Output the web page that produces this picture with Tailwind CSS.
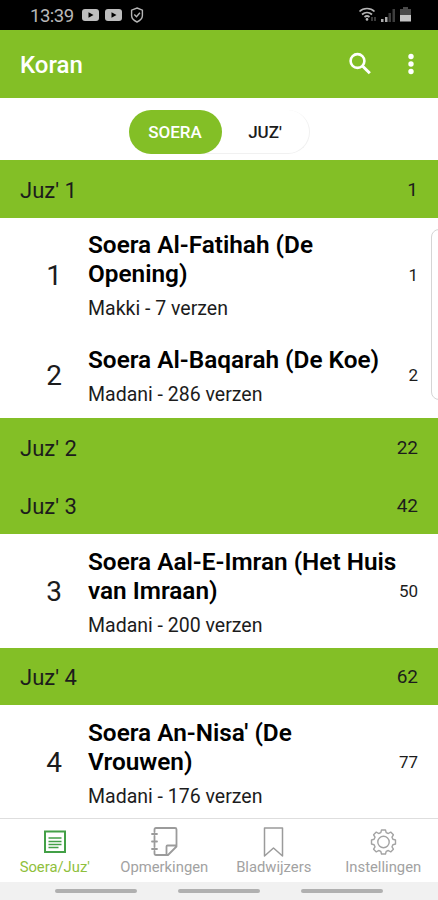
<!DOCTYPE html>
<html lang="nl">
<head>
    <meta charset="UTF-8">
    <meta name="viewport" content="width=device-width, initial-scale=1.0">
    <title>Koran</title>
    <script src="https://cdn.jsdelivr.net/npm/@tailwindcss/browser@4"></script>
</head>
<body class="bg-white font-[Roboto,sans-serif] text-[#1c1c1c]">
    <div class="relative flex flex-col w-[438px] h-[900px] overflow-hidden">
        <!-- Status bar -->
        <div class="flex items-center h-[30px] shrink-0 bg-black pl-[30px] pr-[27px] text-[#b8b8b8]">
            <span class="w-[45px] pt-px text-[18.500px] leading-[30px] tracking-[-0.5px] whitespace-nowrap">13:39</span>
            <svg class="ml-[7px]" width="17" height="14" viewBox="0 0 17 14"><rect y="1" width="17" height="12" rx="3" fill="#bdbdbd"/><path d="M6.500 4.200v5.600l5-2.800z" fill="#000"/></svg>
            <svg class="ml-[6px]" width="17" height="14" viewBox="0 0 17 14"><rect y="1" width="17" height="12" rx="3" fill="#bdbdbd"/><path d="M6.500 4.200v5.600l5-2.800z" fill="#000"/></svg>
            <svg class="ml-[8px]" width="14" height="16" viewBox="0 0 14 16" fill="none" stroke="#b5b5b5" stroke-width="1.400"><path d="M7 1l5.400 2.200v5.300c0 2.800-2.200 5-5.400 6.500-3.200-1.500-5.400-3.700-5.400-6.500v-5.300z"/><path d="M4.300 7.500l2.200 2.200 3.400-4"/></svg>
            <svg class="ml-auto" width="20" height="16" viewBox="0 0 20 16" fill="none" stroke="#b5b5b5" stroke-width="1.700"><path d="M1.500 4.500c4-4 11-4 15 0M4 7.500c3-2.700 7-2.700 10 0M6.500 10c1.500-1.200 3.500-1.200 5 0"/><circle cx="9" cy="12.400" r="1.300" fill="#b5b5b5" stroke="none"/><path d="M14 10v4M17 10v4" stroke="#444"/></svg>
            <svg class="ml-[3px]" width="15" height="16" viewBox="0 0 15 16"><path d="M0 12h2.500v3H0zM4 10h2.500v5H4z" fill="#aaa"/><path d="M7.500 6H10v9H7.500zM11.500 2H14v13h-2.500z" fill="#3d3d3d"/></svg>
            <svg class="ml-[4px]" width="11" height="16" viewBox="0 0 11 16"><path d="M3 0h5v2h3v7H0V2h3z" fill="#4a4a4a"/><path d="M0 8h11v6.500H0z" fill="#c4c4c4"/></svg>
        </div>

        <!-- App bar -->
        <header class="flex items-center h-[68px] shrink-0 bg-[#83bf26] pl-5 pr-[22px] text-white">
            <h1 class="pt-0.5 text-[24px] font-medium">Koran</h1>
            <svg class="ml-auto" width="24" height="24" viewBox="0 0 24 24" fill="none" stroke="#fff" stroke-width="2.600"><circle cx="9.500" cy="9" r="6.900"/><path d="M14.500 14l7.300 7.300" stroke-width="3"/></svg>
            <svg class="ml-[34px]" width="10" height="22" viewBox="0 0 10 22" fill="#fff"><circle cx="5" cy="3.500" r="2.700"/><circle cx="5" cy="11" r="2.700"/><circle cx="5" cy="18.500" r="2.700"/></svg>
        </header>

        <!-- Soera / Juz' switch -->
        <div class="flex justify-center h-[62px] shrink-0 pt-3">
            <div class="flex w-[181px] h-[44px] rounded-full border-r border-b border-[#f1f1f1] text-[17px] font-medium">
                <button class="w-[93px] h-[44px] rounded-full bg-[#83bf26] pt-0.5 text-white">SOERA</button>
                <button class="flex-1 h-[44px] pt-0.5">JUZ'</button>
            </div>
        </div>

        <!-- List -->
        <main class="flex flex-col h-[658px] shrink-0">
            <div class="flex items-center justify-between h-[58px] shrink-0 bg-[#83bf26] px-5 pt-0.5">
                <span class="text-[22px]">Juz' 1</span><span class="text-[19px]">1</span>
            </div>
            <div class="flex items-center h-[114px] shrink-0 pl-[20px] pr-5 pt-px">
                <span class="w-[68px] text-center text-[28px]">1</span>
                <div class="flex-1">
                    <h2 class="text-[24.350px] leading-[29px] font-semibold text-black whitespace-nowrap">Soera Al-Fatihah (De<br>Opening)</h2>
                    <p class="mt-[9px] text-[19.500px] leading-6">Makki - 7 verzen</p>
                </div>
                <span class="text-[17px]">1</span>
            </div>
            <div class="flex items-center h-[86px] shrink-0 pl-[20px] pr-5 pt-0.5">
                <span class="w-[68px] text-center text-[28px]">2</span>
                <div class="flex-1">
                    <h2 class="text-[24.350px] leading-[29px] font-semibold text-black whitespace-nowrap">Soera Al-Baqarah (De Koe)</h2>
                    <p class="mt-[9px] text-[19.500px] leading-6">Madani - 286 verzen</p>
                </div>
                <span class="text-[17px]">2</span>
            </div>
            <div class="flex items-center justify-between h-[58px] shrink-0 bg-[#83bf26] px-5 pt-[3px]">
                <span class="text-[22px]">Juz' 2</span><span class="text-[19px]">22</span>
            </div>
            <div class="flex items-center justify-between h-[58px] shrink-0 bg-[#83bf26] px-5 pt-[3px]">
                <span class="text-[22px]">Juz' 3</span><span class="text-[19px]">42</span>
            </div>
            <div class="flex items-center h-[114px] shrink-0 pl-[20px] pr-5 pt-0.5">
                <span class="w-[68px] text-center text-[28px]">3</span>
                <div class="flex-1 w-0">
                    <h2 class="text-[24.350px] leading-[29px] font-semibold text-black whitespace-nowrap">Soera Aal-E-Imran (Het Huis<br>van Imraan)</h2>
                    <p class="mt-[9px] text-[19.500px] leading-6">Madani - 200 verzen</p>
                </div>
                <span class="text-[17px]">50</span>
            </div>
            <div class="flex items-center justify-between h-[57px] shrink-0 bg-[#83bf26] px-5 pt-px">
                <span class="text-[22px]">Juz' 4</span><span class="text-[19px]">62</span>
            </div>
            <div class="flex items-center h-[114px] shrink-0 pl-[20px] pr-5 pt-0.5">
                <span class="w-[68px] text-center text-[28px]">4</span>
                <div class="flex-1">
                    <h2 class="text-[24.350px] leading-[29px] font-semibold text-black whitespace-nowrap">Soera An-Nisa' (De<br>Vrouwen)</h2>
                    <p class="mt-[9px] text-[19.500px] leading-6">Madani - 176 verzen</p>
                </div>
                <span class="text-[17px]">77</span>
            </div>
        </main>

        <!-- Edge panel handle -->
        <div class="absolute left-[431px] top-[229px] w-4 h-[171px] rounded-lg border border-[#d5d5d5] bg-white"></div>

        <!-- Tab bar -->
        <nav class="grid grid-cols-4 h-[64px] shrink-0 border-t border-[#dedede] bg-white text-[14.800px] text-[#a2a2a2]">
            <a class="flex flex-col items-center text-[#8fc03c]">
                <svg class="mt-[6px]" width="32" height="32" viewBox="0 0 32 32" fill="none" stroke="#43a047" stroke-width="2"><rect x="6" y="6.500" width="20" height="20.500"/><path d="M9.500 13h13M9.500 16.500h13M9.500 19.500h13M9.500 22.500h10" stroke-width="1.500"/></svg>
                <span class="leading-[20px]">Soera/Juz'</span>
            </a>
            <a class="flex flex-col items-center">
                <svg class="mt-[6px]" width="32" height="32" viewBox="0 0 32 32" fill="none" stroke="#9b9b9b" stroke-width="1.800" stroke-linejoin="round" stroke-linecap="round"><path d="M6.500 7V4.500q0-1.500 1.500-1.500h19q1.500 0 1.500 1.500V21.500l-8.500 8.500H8q-1.500 0-1.500-1.500V26M6.500 11v4M6.500 18v4M18.500 30v-8.500q0-1 1-1h9M4 9h5M4 16.500h5M4 24h5"/></svg>
                <span class="leading-[20px]">Opmerkingen</span>
            </a>
            <a class="flex flex-col items-center">
                <svg class="mt-[6px]" width="32" height="32" viewBox="0 0 32 32" fill="none" stroke="#9b9b9b" stroke-width="1.500" stroke-linejoin="round"><path d="M6.500 3h18v28l-9-8-9 8z"/></svg>
                <span class="leading-[20px]">Bladwijzers</span>
            </a>
            <a class="flex flex-col items-center">
                <!-- Eight-toothed gear -->
                <svg class="mt-[6px]" width="32" height="32" viewBox="0 0 32 32" fill="none" stroke="#a3a3a3" stroke-width="1.400" stroke-linejoin="round"><circle cx="16.500" cy="17" r="5.700"/><path d="M14.500 5h4l.7 2.600 2.100.9 2.400-1.400 2.700 2.700-1.400 2.400.9 2.100 2.600.7v4l-2.600.7-.9 2.100 1.400 2.400-2.700 2.700-2.400-1.400-2.100.9-.7 2.600h-4l-.7-2.600-2.100-.9-2.400 1.400-2.700-2.700 1.400-2.400-.9-2.100-2.600-.7v-4l2.600-.7.900-2.100-1.400-2.400 2.700-2.700 2.400 1.400 2.100-.9z"/></svg>
                <span class="leading-[20px]">Instellingen</span>
            </a>
        </nav>

        <!-- Gesture hints -->
        <div class="flex h-[18px] shrink-0 items-center justify-center gap-[41px] bg-[#f1f1f1]">
            <div class="w-[82px] h-1 rounded-full bg-[#b0b0b0]"></div>
            <div class="w-[82px] h-1 rounded-full bg-[#b0b0b0]"></div>
            <div class="w-[82px] h-1 rounded-full bg-[#b0b0b0]"></div>
        </div>
    </div>
</body>
</html>
